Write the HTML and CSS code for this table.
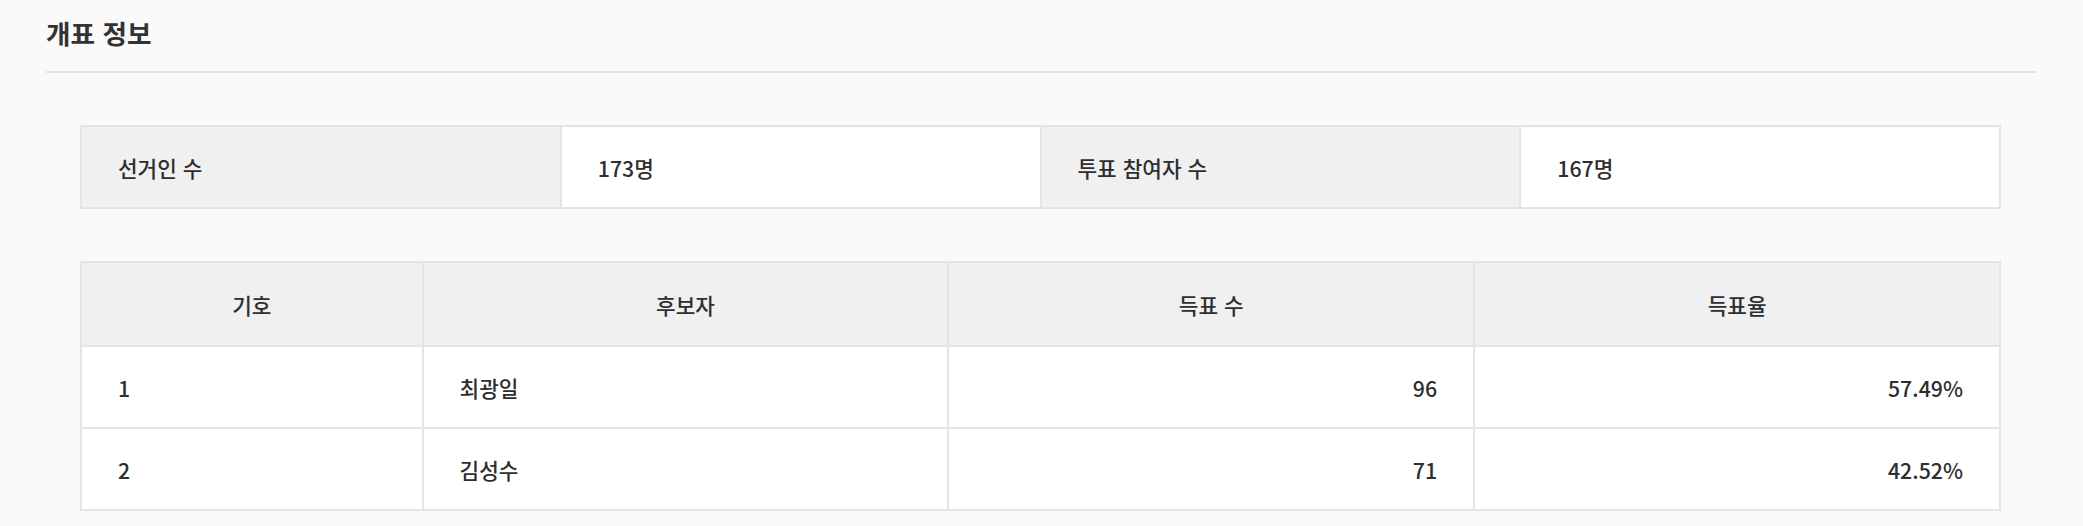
FILE: index.html
```html
<!DOCTYPE html>
<html lang="ko">
<head>
<meta charset="utf-8">
<title>개표 정보</title>
<link rel="stylesheet" href="styles.css">
</head>
<body>
<section class="section">
  <h2 class="section-title">개표 정보</h2>
  <div class="section-body">
    <table class="info-table">
      <tbody>
        <tr>
          <th class="label">선거인 수</th>
          <td class="value">173명</td>
          <th class="label">투표 참여자 수</th>
          <td class="value">167명</td>
        </tr>
      </tbody>
    </table>
    <table class="result-table">
      <colgroup>
        <col class="col-no">
        <col class="col-wide">
        <col class="col-wide">
        <col class="col-wide">
      </colgroup>
      <thead>
        <tr>
          <th>기호</th>
          <th>후보자</th>
          <th>득표 수</th>
          <th>득표율</th>
        </tr>
      </thead>
      <tbody>
        <tr>
          <td>1</td>
          <td>최광일</td>
          <td class="num">96</td>
          <td class="num">57.49%</td>
        </tr>
        <tr>
          <td>2</td>
          <td>김성수</td>
          <td class="num">71</td>
          <td class="num">42.52%</td>
        </tr>
      </tbody>
    </table>
  </div>
</section>
</body>
</html>
```
FILE: styles.css
```css
html, body {
  margin: 0;
  padding: 0;
  background: #fafafa;
}

body {
  font-family: "Noto Sans CJK KR", "Noto Sans", sans-serif;
  color: #2e2e2e;
  font-size: 21.33px;
}

.section {
  padding: 15px 47px 0 46px;
}

.section-title {
  margin: 0;
  font-size: 26.67px;
  line-height: 36px;
  font-weight: 700;
  color: #333333;
  padding-bottom: 20px;
  border-bottom: 2px solid #e2e2e2;
}

.section-body {
  padding: 52px 35px 0 34px;
}

table {
  width: 100%;
  border-collapse: collapse;
  table-layout: fixed;
}

th, td {
  border: 2px solid #e4e4e4;
  font-weight: 500;
  text-align: left;
  padding: 0 36px;
}

.info-table th,
.info-table td {
  height: 80px;
}

.info-table .label {
  background: #f0f0f0;
}

.info-table .value {
  background: #ffffff;
}

.result-table {
  margin-top: 52px;
}

.col-no {
  width: 17.8%;
}

.result-table thead th {
  background: #f0f0f0;
  text-align: center;
  height: 82px;
}

.result-table tbody td {
  background: #ffffff;
  height: 80px;
}

.result-table td.num {
  text-align: right;
}
```
